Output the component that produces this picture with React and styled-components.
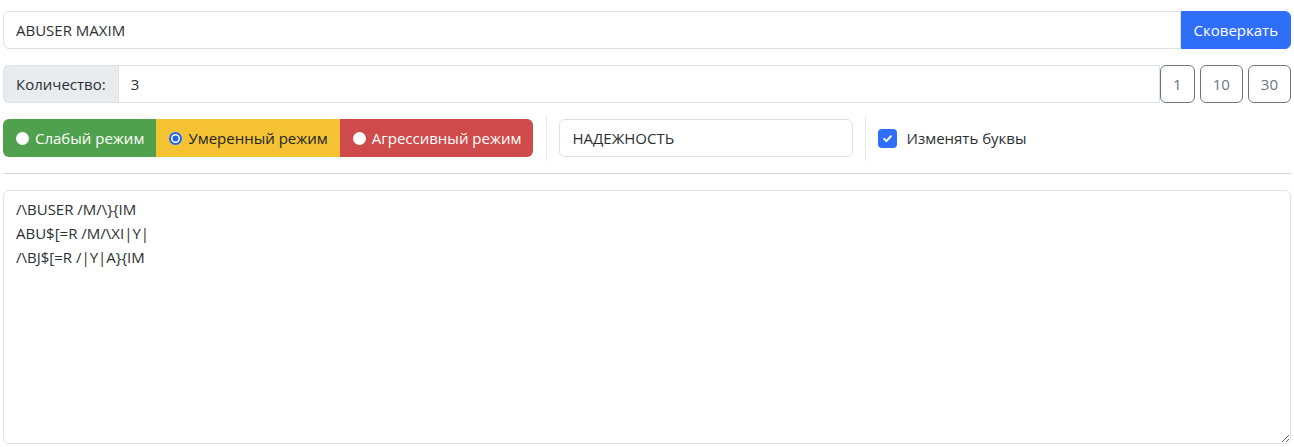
import { useState } from "react";
import styled, { createGlobalStyle } from "styled-components";

const GlobalStyle = createGlobalStyle`
    body {
        margin: 0;
        background: #fff;
        font-family: "Open Sans", "Noto Sans", sans-serif;
        font-size: 16px;
        color: #212529;
    }
    * { box-sizing: border-box; }
`;

const Page = styled.div`
    padding: 11px 3px 3px;
`;

const Row = styled.div`
    display: flex;
    align-items: stretch;
    margin-bottom: 16px;
`;

const TextInput = styled.input`
    flex: ${(p) => (p.$grow ? 1 : "none")};
    width: ${(p) => p.$width || "auto"};
    height: 38px;
    padding: 6px 12px;
    font: inherit;
    font-size: 15px;
    color: #2b2f33;
    border: 1px solid #dee2e6;
    border-radius: ${(p) => p.$radius || "6px"};
    outline: none;
    background: #fff;
`;

const Addon = styled.span`
    display: flex;
    align-items: center;
    padding: 6px 12px;
    font-size: 15px;
    background: #e9ecef;
    border: 1px solid #dee2e6;
    border-right: none;
    border-radius: 6px 0 0 6px;
    color: #2b2f33;
`;

const PrimaryButton = styled.button`
    height: 38px;
    padding: 6px 12px;
    font: inherit;
    font-size: 15px;
    color: #fff;
    background: #2f6ef8;
    border: 1px solid #2f6ef8;
    border-radius: 0 6px 6px 0;
`;

const CountButtons = styled.div`
    display: flex;
    gap: 5px;
`;

const OutlineButton = styled.button`
    height: 38px;
    padding: 6px 12px;
    font: inherit;
    font-size: 15px;
    color: #6c757d;
    background: #fff;
    border: 1px solid #6c757d;
    border-radius: 6px;
`;

const Toolbar = styled.div`
    display: flex;
    align-items: center;
    gap: 12px;
`;

const ModeGroup = styled.div`
    display: flex;
    height: 38px;
    border-radius: 6px;
    overflow: hidden;
    margin-right: 1px;
`;

const ModeButton = styled.label`
    display: flex;
    align-items: center;
    gap: 6px;
    padding: 0 12px 0 13px;
    font-size: 15px;
    color: ${(p) => p.$fg};
    background: ${(p) => p.$bg};
    cursor: pointer;
`;

const Radio = styled.span`
    width: 13px;
    height: 13px;
    border-radius: 50%;
    background: ${(p) => (p.$checked ? "#1f66e5" : "#fff")};
    box-shadow: ${(p) => (p.$checked ? "inset 0 0 0 2px #1f66e5, inset 0 0 0 3.5px #fff" : "none")};
    flex: none;
`;

const Divider = styled.div`
    width: 1px;
    align-self: stretch;
    margin: -4px 0;
    background: #e8eaec;
`;

const CheckLabel = styled.label`
    display: flex;
    align-items: center;
    gap: 9px;
    font-size: 15px;
    color: #2b2f33;
`;

const CheckBox = styled.span`
    width: 19px;
    height: 19px;
    border-radius: 4px;
    background: #2f6ef8;
    display: flex;
    align-items: center;
    justify-content: center;
`;

const Rule = styled.hr`
    margin: 16px 0 16px;
    border: 0;
    border-top: 1px solid #d3d4d5;
`;

const Output = styled.textarea`
    display: block;
    width: 100%;
    height: 254px;
    padding: 6px 12px;
    font: inherit;
    font-size: 15px;
    line-height: 24px;
    color: #2b2f33;
    border: 1px solid #dee2e6;
    border-radius: 6px;
    outline: none;
    resize: vertical;
`;

const modes = [
    { id: "weak", label: "Слабый режим", bg: "#4fa14d", fg: "#fff" },
    { id: "mid", label: "Умеренный режим", bg: "#f4c233", fg: "#212529" },
    { id: "hard", label: "Агрессивный режим", bg: "#cf4a4a", fg: "#fff" },
];

export default function App() {
    const [mode, setMode] = useState("mid");
    const [count, setCount] = useState("3");

    return (
        <Page>
            <GlobalStyle />
            <Row>
                <TextInput $grow $radius="6px 0 0 6px" defaultValue="ABUSER MAXIM" />
                <PrimaryButton>Сковеркать</PrimaryButton>
            </Row>
            <Row>
                <Addon>Количество:</Addon>
                <TextInput $grow $radius="0" value={count} onChange={(e) => setCount(e.target.value)} />
                <CountButtons>
                    <OutlineButton onClick={() => setCount("1")}>1</OutlineButton>
                    <OutlineButton onClick={() => setCount("10")}>10</OutlineButton>
                    <OutlineButton onClick={() => setCount("30")}>30</OutlineButton>
                </CountButtons>
            </Row>
            <Toolbar>
                <ModeGroup>
                    {modes.map((m) => (
                        <ModeButton key={m.id} $bg={m.bg} $fg={m.fg} onClick={() => setMode(m.id)}>
                            <Radio $checked={mode === m.id} />
                            {m.label}
                        </ModeButton>
                    ))}
                </ModeGroup>
                <Divider />
                <TextInput $width="294px" defaultValue="НАДЕЖНОСТЬ" />
                <Divider />
                <CheckLabel>
                    <CheckBox>
                        <svg width="15" height="15" viewBox="0 0 20 20">
                            <path d="M5.5 10.5l3 3L14.5 7" fill="none" stroke="#fff" strokeWidth="2.6" strokeLinecap="round" strokeLinejoin="round" />
                        </svg>
                    </CheckBox>
                    Изменять буквы
                </CheckLabel>
            </Toolbar>
            <Rule />
            <Output defaultValue={"/\\BUSER /M/\\}{IM\nABU$[=R /M/\\XI|Y|\n/\\BJ$[=R /|Y|A}{IM"} />
        </Page>
    );
}
